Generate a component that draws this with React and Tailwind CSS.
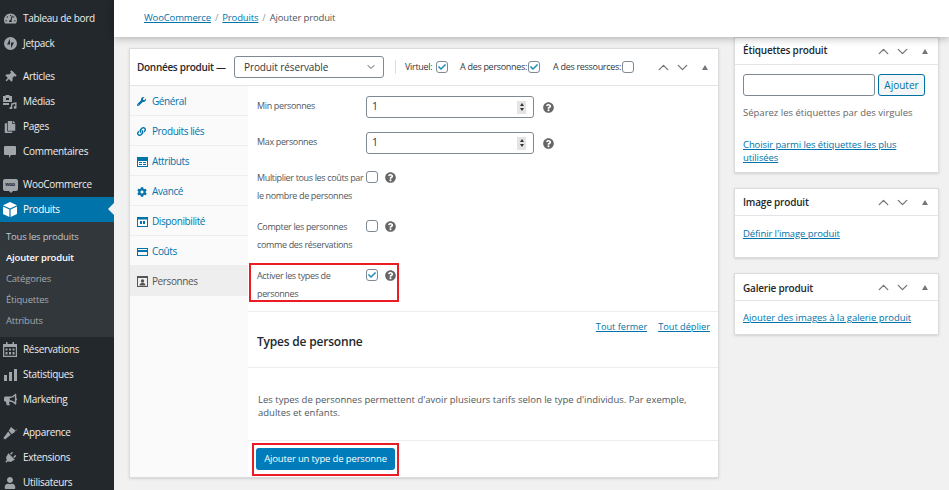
import React from "react";
import { ChevronUp, ChevronDown } from "lucide-react";
import {
  FaTachometerAlt,
  FaThumbtack,
  FaCopy,
  FaBullhorn,
  FaPlug,
  FaUser,
  FaWrench,
  FaLink,
  FaCog,
  FaQuestionCircle,
  FaCheck,
} from "react-icons/fa";

const StatsIcon = () => (
  <svg width="13" height="12" viewBox="0 0 13 12" fill="currentColor">
    <rect x="0" y="6" width="3" height="6" />
    <rect x="5" y="3" width="3" height="9" />
    <rect x="10" y="0" width="3" height="12" />
  </svg>
);

const JetpackIcon = () => (
  <svg width="13" height="13" viewBox="0 0 13 13">
    <circle cx="6.5" cy="6.5" r="6.5" fill="#a0a5aa" />
    <path d="M6 1.8V7.6H3Z M7 11.2V5.4H10Z" fill="#23282d" />
  </svg>
);

const WooIcon = () => (
  <span className="relative w-[15px] h-[12px] rounded-[2px] bg-[#a0a5aa] text-[#23282d] text-[5px] font-bold flex items-center justify-center leading-none">
    woo
    <span className="absolute left-[6px] top-[12px] w-0 h-0 border-x-[2px] border-x-transparent border-t-[2px] border-t-[#a0a5aa]" />
  </span>
);

const BoxIcon = () => (
  <svg width="14" height="15" viewBox="0 0 14 15" fill="#fff">
    <path d="M7 0 14 3.2 7 6.4 0 3.2Z" />
    <path d="M0 4.6 6.4 7.6V15L0 12Z" />
    <path d="M14 4.6 7.6 7.6V15L14 12Z" />
  </svg>
);

const MediaIcon = () => (
  <svg width="14" height="14" viewBox="0 0 14 14" fill="currentColor">
    <path d="M0 1H2L3 0H6L7 1H9V7H0ZM3 3V5H6V3Z" fillRule="evenodd" />
    <path d="M8 8.5 13.5 7V12.2A1.4 1.4 0 1 1 12.2 11V9L9.3 9.8V13A1.4 1.4 0 1 1 8 11.8Z" />
    <path d="M0 8H6V10H0Z" />
  </svg>
);

const CommentIcon = () => (
  <svg width="12" height="12" viewBox="0 0 12 12" fill="currentColor">
    <path d="M1 0H11A1 1 0 0 1 12 1V8A1 1 0 0 1 11 9H7L5 12V9H1A1 1 0 0 1 0 8V1A1 1 0 0 1 1 0Z" />
  </svg>
);

const CalendarBigIcon = () => (
  <svg width="14" height="15" viewBox="0 0 14 15" fill="currentColor">
    <path d="M3 0H4.5V2H9.5V0H11V2H14V15H0V2H3ZM1.2 5V13.8H12.8V5Z" fillRule="evenodd" />
    <path d="M2.5 6.5H4.5V8.5H2.5ZM6 6.5H8V8.5H6ZM9.5 6.5H11.5V8.5H9.5ZM2.5 10H4.5V12.5H2.5ZM6 10H8V12.5H6ZM9.5 10H11.5V12.5H9.5Z" />
  </svg>
);

const BrushIcon = () => (
  <svg width="14" height="14" viewBox="0 0 14 14" fill="currentColor">
    <path d="M8 1 13 5 14 2.5 11 6.8 8.5 8 5.8 4.8Z" />
    <path d="M5.2 5.6 7.8 8.8 2 13.4 0.4 12Z" />
  </svg>
);

const TableTabIcon = () => (
  <svg width="11" height="10" viewBox="0 0 11 10" fill="currentColor">
    <path d="M0 0H11V10H0ZM1 4V9H10V4Z" fillRule="evenodd" />
    <path d="M2 5H5V6H2ZM6 5H9V6H6ZM2 7H5V8H2ZM6 7H9V8H6Z" />
  </svg>
);

const CalendarTabIcon = () => (
  <svg width="11" height="11" viewBox="0 0 11 11" fill="currentColor">
    <path d="M0 1H11V11H0ZM1 3.5V10H10V3.5Z" fillRule="evenodd" />
    <path d="M3 5H5V8H3ZM6 5H8V8H6Z" />
  </svg>
);

const CardTabIcon = () => (
  <svg width="11" height="10" viewBox="0 0 11 10" fill="currentColor">
    <path d="M0 1H11V9H0ZM1 2V3H10V2ZM1 5V8H10V5Z" fillRule="evenodd" />
  </svg>
);

const PersonTabIcon = () => (
  <svg width="11" height="11" viewBox="0 0 11 11" fill="currentColor">
    <path d="M0 0H11V11H0ZM1 2V10H10V2Z" fillRule="evenodd" />
    <circle cx="5.5" cy="5" r="1.7" />
    <path d="M2.5 9.5C2.5 7.5 4 7 5.5 7S8.5 7.5 8.5 9.5Z" />
  </svg>
);

const menuTop = [
  { label: "Tableau de bord", icon: <FaTachometerAlt size={13} /> },
  { label: "Jetpack", icon: <JetpackIcon /> },
  { sep: true },
  { label: "Articles", icon: <FaThumbtack size={12} className="rotate-45" /> },
  { label: "Médias", icon: <MediaIcon /> },
  { label: "Pages", icon: <FaCopy size={12} /> },
  { label: "Commentaires", icon: <CommentIcon /> },
  { sep: true },
  { label: "WooCommerce", icon: <WooIcon /> },
];

const menuBottom = [
  { label: "Réservations", icon: <CalendarBigIcon /> },
  { label: "Statistiques", icon: <StatsIcon /> },
  { label: "Marketing", icon: <FaBullhorn size={13} /> },
  { sep: true },
  { label: "Apparence", icon: <BrushIcon /> },
  { label: "Extensions", icon: <FaPlug size={12} className="rotate-45" /> },
  { label: "Utilisateurs", icon: <FaUser size={12} /> },
];

const subMenu = ["Tous les produits", "Ajouter produit", "Catégories", "Étiquettes", "Attributs"];

const tabs = [
  { label: "Général", icon: <FaWrench size={9} /> },
  { label: "Produits liés", icon: <FaLink size={9} /> },
  { label: "Attributs", icon: <TableTabIcon /> },
  { label: "Avancé", icon: <FaCog size={10} /> },
  { label: "Disponibilité", icon: <CalendarTabIcon /> },
  { label: "Coûts", icon: <CardTabIcon /> },
  { label: "Personnes", icon: <PersonTabIcon />, active: true },
];

const MenuItem = ({ item }) =>
  item.sep ? (
    <div className="h-2" />
  ) : (
    <div className="h-[25px] flex items-center text-[#eeeeee]">
      <span className="w-[23px] pr-[3px] flex justify-center shrink-0 text-[#a0a5aa]">{item.icon}</span>
      <span>{item.label}</span>
    </div>
  );

const Sidebar = () => (
  <aside className="w-[114px] shrink-0 h-[490px] overflow-hidden bg-[#23282d] pt-[6px] text-[10px] tracking-[-0.3px]">
    {menuTop.map((item, i) => (
      <MenuItem key={i} item={item} />
    ))}
    <div className="relative h-[25px] bg-[#0073aa] text-white flex items-center">
      <span className="w-[23px] pr-[3px] flex justify-center shrink-0">
        <BoxIcon />
      </span>
      <span>Produits</span>
      <span className="absolute right-0 top-[6px] w-0 h-0 border-y-[6px] border-y-transparent border-r-[6px] border-r-[#f1f1f1]" />
    </div>
    <div className="bg-[#32373c] pt-[5px] pb-[5px] text-[9.5px] tracking-[-0.2px]">
      {subMenu.map((s, i) => (
        <div
          key={s}
          className={`h-[21px] pl-[6px] flex items-center ${i === 1 ? "text-white font-semibold" : i === 0 ? "text-[#c3c6c9]" : "text-[#a4a9ae]"}`}
        >
          {s}
        </div>
      ))}
    </div>
    {menuBottom.map((item, i) => (
      <MenuItem key={i} item={item} />
    ))}
  </aside>
);

const Checkbox = ({ checked }) => (
  <span className="w-[12px] h-[12px] shrink-0 rounded-[3px] border border-[#7e8993] bg-white flex items-center justify-center">
    {checked && <FaCheck size={8} className="text-[#1e8cbe]" />}
  </span>
);

const Help = () => <FaQuestionCircle size={11} className="text-[#666666] shrink-0" />;

const BoxControls = () => (
  <div className="flex items-center text-[#72777c]">
    <ChevronUp size={17} strokeWidth={1.9} />
    <ChevronDown size={17} strokeWidth={1.9} className="ml-[2px]" />
    <span className="ml-[11px] w-0 h-0 border-x-[3.5px] border-x-transparent border-b-[5px] border-b-[#72777c]" />
  </div>
);

const NumberInput = () => (
  <div className="w-[168px] h-[22px] rounded-[3px] border border-[#7e8993] bg-white flex items-center justify-between pl-[5px] pr-[7px] text-[#32373c]">
    <span className="text-[10.5px]">1</span>
    <span className="w-[9px] h-[13px] bg-[#e4e4e4] flex flex-col items-center justify-center gap-[2px]">
      <span className="w-0 h-0 border-x-[2px] border-x-transparent border-b-[3px] border-b-[#333]" />
      <span className="w-0 h-0 border-x-[2px] border-x-transparent border-t-[3px] border-t-[#333]" />
    </span>
  </div>
);

const NumberField = ({ label, className }) => (
  <div className={`pl-[9px] flex items-center h-[22px] ${className}`}>
    <span className="w-[109px] pb-[3px] text-[9px] tracking-[-0.35px] text-[#50575e]">{label}</span>
    <NumberInput />
    <span className="ml-[9px] flex">
      <Help />
    </span>
  </div>
);

const CheckField = ({ lines, checked, className }) => (
  <div className={`flex pl-[9px] ${className}`}>
    <div className="w-[109px] pt-[1px] leading-[18px] text-[9px] tracking-[-0.35px] text-[#50575e] whitespace-nowrap">
      {lines.map((l) => (
        <div key={l}>{l}</div>
      ))}
    </div>
    <div className="mt-[3px]">
      <Checkbox checked={checked} />
    </div>
    <div className="ml-[7px] mt-[4px]">
      <Help />
    </div>
  </div>
);

const ProductData = () => (
  <section className="w-[590px] h-[430px] mt-[11px] bg-white border border-[#dcdcde] shadow-sm flex flex-col">
    <header className="h-[37px] shrink-0 border-b border-[#e2e4e7] flex items-center pl-[7px] text-[#32373c]">
      <span className="w-[97px] text-[10px] tracking-[-0.3px] font-semibold text-[#23282d] whitespace-nowrap">Données produit —</span>
      <div className="w-[150px] h-[22px] rounded-[3px] border border-[#7e8993] flex items-center justify-between pl-[9px] pr-[6px] text-[10px] tracking-[-0.1px] font-medium">
        Produit réservable
        <ChevronDown size={12} className="text-[#555]" />
      </div>
      <span className="w-px h-[14px] bg-[#dddddd] ml-[11px]" />
      <div className="ml-[9px] flex items-center text-[9px] tracking-[-0.3px] whitespace-nowrap">
        <span className="w-[31px]">Virtuel:</span>
        <Checkbox checked />
        <span className="ml-[12px] w-[68px]">A des personnes:</span>
        <Checkbox checked />
        <span className="ml-[13px] w-[69px]">A des ressources:</span>
        <Checkbox />
      </div>
      <div className="ml-[21px]">
        <BoxControls />
      </div>
    </header>
    <div className="flex flex-1 min-h-0">
      <nav className="w-[118px] shrink-0 bg-[#fafafa] text-[10px] tracking-[-0.4px]">
        {tabs.map((t) => (
          <div
            key={t.label}
            className={`h-[30px] pt-[2px] pl-[7px] flex items-center border-b border-[#eeeeee] ${t.active ? "bg-[#eeeeee] text-[#555555]" : "text-[#0073aa]"}`}
          >
            <span className="w-[15px] shrink-0">{t.icon}</span>
            {t.label}
          </div>
        ))}
      </nav>
      <div className="flex-1 min-w-0 flex flex-col">
        <NumberField label="Min personnes" className="mt-[10px]" />
        <NumberField label="Max personnes" className="mt-[14px]" />
        <CheckField className="mt-[14px]" lines={["Multiplier tous les coûts par", "le nombre de personnes"]} />
        <CheckField className="mt-[12px]" lines={["Compter les personnes", "comme des réservations"]} />
        <div className="relative mt-[12px]">
          <CheckField lines={["Activer les types de", "personnes"]} checked />
          <div className="absolute left-[1px] top-[-3px] w-[150px] h-[39px] border-2 border-[#ed1c24] pointer-events-none" />
        </div>
        <div className="mt-[8px] h-[57px] shrink-0 border-y border-[#eeeeee] flex items-start justify-between pl-[9px] pr-[8px]">
          <h2 className="mt-[21px] text-[12px] tracking-[-0.2px] font-semibold text-[#23282d]">Types de personne</h2>
          <div className="mt-[8px] flex gap-[11px] text-[9.2px] text-[#0073aa] underline">
            <span>Tout fermer</span>
            <span>Tout déplier</span>
          </div>
        </div>
        <div className="h-[72px] shrink-0 pl-[10px] pr-[20px] pt-[25px] text-[9.5px] leading-[13px] text-[#50575e]">
          Les types de personnes permettent d'avoir plusieurs tarifs selon le type d'individus. Par exemple, adultes et enfants.
        </div>
        <div className="relative flex-1 border-t border-[#eeeeee] pl-[8px] pt-[7px]">
          <div className="w-[139px] h-[22px] rounded-[3px] bg-[#007cba] text-white text-[9.5px] tracking-[-0.15px] flex items-center justify-center">
            Ajouter un type de personne
          </div>
          <div className="absolute left-[4px] top-[2px] w-[147px] h-[33px] border-2 border-[#ed1c24] pointer-events-none" />
        </div>
      </div>
    </div>
  </section>
);

const SideBox = ({ title, className, titleClass, children }) => (
  <section className={`w-[205px] bg-white border border-[#dcdcde] shadow-sm ${className}`}>
    <header className="h-[27px] border-b border-[#e2e4e7] flex items-center justify-between pl-[8px] pr-[10px]">
      <span className={`text-[10px] tracking-[-0.2px] font-semibold text-[#23282d] ${titleClass}`}>{title}</span>
      <BoxControls />
    </header>
    {children}
  </section>
);

const SideColumn = () => (
  <div className="flex flex-col">
    <SideBox title="Étiquettes produit" className="h-[136px]" titleClass="pb-[2px]">
      <div className="pl-[8px] pr-[13px] pt-[9px]">
        <div className="flex items-center gap-[3px]">
          <div className="w-[132px] h-[22px] rounded-[3px] border border-[#7e8993] bg-white" />
          <div className="w-[47px] h-[22px] rounded-[3px] border border-[#0071a1] bg-[#f3f5f6] text-[#0071a1] text-[10px] flex items-center justify-center">
            Ajouter
          </div>
        </div>
        <p className="mt-[10px] text-[9.5px] text-[#666666]">Séparez les étiquettes par des virgules</p>
        <p className="mt-[18px] text-[9.5px] tracking-[-0.1px] leading-[13px] text-[#0073aa] underline">Choisir parmi les étiquettes les plus utilisées</p>
      </div>
    </SideBox>
    <SideBox title="Image produit" className="h-[70px] mt-[15px]" titleClass="pt-[1px]">
      <p className="pl-[8px] pt-[11px] text-[9.5px] tracking-[-0.1px] text-[#0073aa] underline">Définir l'image produit</p>
    </SideBox>
    <SideBox title="Galerie produit" className="h-[62px] mt-[15px]" titleClass="pt-[2px]">
      <p className="pl-[8px] pt-[10px] text-[9.5px] tracking-[-0.05px] text-[#0073aa] underline">Ajouter des images à la galerie produit</p>
    </SideBox>
  </div>
);

export default function App() {
  return (
    <div className="w-[949px] h-[490px] overflow-hidden flex bg-[#f1f1f1] font-['Open_Sans',sans-serif]">
      <Sidebar />
      <main className="flex-1 min-w-0 flex flex-col">
        <div className="relative z-10 h-[37px] shrink-0 bg-white shadow-[0_1px_8px_rgba(0,0,0,0.3)] pl-[30px] flex items-center gap-[4px] text-[9.5px] tracking-[-0.15px] text-[#50575e]">
          <span className="text-[#0073aa] underline">WooCommerce</span>
          <span className="text-[#999]">/</span>
          <span className="text-[#0073aa] underline">Produits</span>
          <span className="text-[#999]">/</span>
          <span>Ajouter produit</span>
        </div>
        <div className="flex pl-[15px] gap-[15px]">
          <ProductData />
          <SideColumn />
        </div>
      </main>
    </div>
  );
}
